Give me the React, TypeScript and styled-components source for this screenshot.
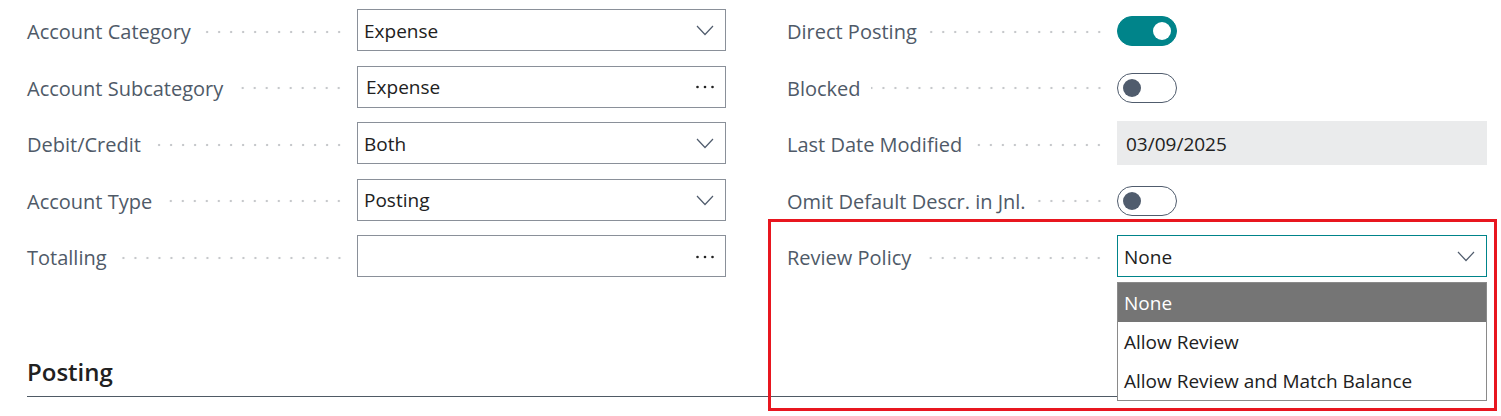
import React from 'react'
import styled, { createGlobalStyle } from 'styled-components'

const GlobalStyle = createGlobalStyle`
  html, body {
    margin: 0;
    padding: 0;
    background: #ffffff;
  }
  body {
    font-family: "Open Sans", "Noto Sans", Arial, sans-serif;
    -webkit-font-smoothing: antialiased;
  }
`

const Page = styled.div`
  padding: 9px 14px 0 27px;
  width: 1501px;
  height: 416px;
  box-sizing: border-box;
  overflow: hidden;
`

const Columns = styled.div`
  display: grid;
  grid-template-columns: 699px 700px;
  column-gap: 61px;
`

const Column = styled.div`
  display: flex;
  flex-direction: column;
`

const Row = styled.div`
  position: relative;
  display: flex;
  align-items: center;
  height: 42px;
  margin-bottom: 14.5px;
`

const Label = styled.div`
  flex: 0 0 330px;
  display: flex;
  align-items: center;
  padding-top: 3px;
  font-size: 20px;
  color: #4f5a68;
  white-space: nowrap;
`

const Leader = styled.span`
  flex: 1;
  height: 4px;
  margin: 0 12px 0 10px;
  background-image: radial-gradient(circle, #c6c8cb 1.1px, transparent 1.6px);
  background-size: 12px 4px;
  background-position: right center;
  background-repeat: repeat-x;
`

const Control = styled.div<{ $focused?: boolean; $readOnly?: boolean }>`
  position: relative;
  flex: 1;
  height: ${(p) => (p.$readOnly ? '44px' : '42px')};
  box-sizing: border-box;
  display: flex;
  align-items: center;
  padding: 1px 11px 0 6px;
  border: 1px solid
    ${(p) => (p.$readOnly ? 'transparent' : p.$focused ? '#00848a' : '#8a9099')};
  background: ${(p) => (p.$readOnly ? '#eaebec' : '#ffffff')};
  font-size: 19px;
  color: #212121;
`

const Value = styled.span<{ $inset?: boolean }>`
  flex: 1;
  padding-left: ${(p) => (p.$inset ? '2px' : '0')};
  white-space: nowrap;
`

const Toggle = styled.div<{ $on?: boolean }>`
  width: 60px;
  height: 30px;
  margin-top: 2px;
  box-sizing: border-box;
  border-radius: 15px;
  border: 1px solid ${(p) => (p.$on ? '#00848a' : '#505c6d')};
  background: ${(p) => (p.$on ? '#00848a' : '#ffffff')};
  display: flex;
  align-items: center;
  justify-content: ${(p) => (p.$on ? 'flex-end' : 'flex-start')};
  padding: 0 5px 0 5px;
`

const Knob = styled.span<{ $on?: boolean }>`
  width: 18px;
  height: 18px;
  border-radius: 50%;
  background: ${(p) => (p.$on ? '#ffffff' : '#505c6d')};
`

const Dropdown = styled.ul`
  position: absolute;
  top: calc(100% + 6px);
  left: -1px;
  right: -1px;
  margin: 0;
  padding: 0;
  list-style: none;
  background: #ffffff;
  border: 1px solid #8a8a8a;
  z-index: 2;
`

const Option = styled.li<{ $active?: boolean }>`
  height: 39px;
  display: flex;
  align-items: center;
  padding: 1px 0 0 6px;
  box-sizing: border-box;
  font-size: 19px;
  background: ${(p) => (p.$active ? '#757575' : '#ffffff')};
  color: ${(p) => (p.$active ? '#ffffff' : '#212121')};
`

const Highlight = styled.div`
  position: absolute;
  top: -16px;
  left: -19px;
  right: -10px;
  height: 192px;
  box-sizing: border-box;
  border: 3px solid #e8161f;
  pointer-events: none;
  z-index: 3;
`

const SectionTitle = styled.h2`
  margin: 64px 0 0 0;
  padding-bottom: 8px;
  font-size: 24px;
  line-height: 32px;
  font-weight: 600;
  color: #212121;
  border-bottom: 1px solid #4f5a65;
  width: 1460px;
`

const Chevron = () => (
  <svg width="18" height="11" viewBox="0 0 18 11" fill="none">
    <polyline points="1,1 9,9.5 17,1" stroke="#505c6d" strokeWidth="1.2" />
  </svg>
)

const Ellipsis = () => (
  <svg width="18" height="4" viewBox="0 0 18 4">
    <circle cx="1.5" cy="2" r="1.3" fill="#212121" />
    <circle cx="9" cy="2" r="1.3" fill="#212121" />
    <circle cx="16.5" cy="2" r="1.3" fill="#212121" />
  </svg>
)

type Field =
  | { kind: 'select' | 'lookup'; label: string; value: string }
  | { kind: 'toggle'; label: string; on: boolean }
  | { kind: 'readonly'; label: string; value: string }

const leftFields: Field[] = [
  { kind: 'select', label: 'Account Category', value: 'Expense' },
  { kind: 'lookup', label: 'Account Subcategory', value: 'Expense' },
  { kind: 'select', label: 'Debit/Credit', value: 'Both' },
  { kind: 'select', label: 'Account Type', value: 'Posting' },
  { kind: 'lookup', label: 'Totalling', value: '' },
]

const rightFields: Field[] = [
  { kind: 'toggle', label: 'Direct Posting', on: true },
  { kind: 'toggle', label: 'Blocked', on: false },
  { kind: 'readonly', label: 'Last Date Modified', value: '03/09/2025' },
  { kind: 'toggle', label: 'Omit Default Descr. in Jnl.', on: false },
]

const reviewOptions = ['None', 'Allow Review', 'Allow Review and Match Balance']

const FieldRow = ({ field }: { field: Field }) => (
  <Row>
    <Label>
      {field.label}
      <Leader />
    </Label>
    {field.kind === 'toggle' ? (
      <Toggle $on={field.on}>
        <Knob $on={field.on} />
      </Toggle>
    ) : field.kind === 'readonly' ? (
      <Control $readOnly>
        <Value $inset>{field.value}</Value>
      </Control>
    ) : (
      <Control>
        <Value $inset={field.kind === 'lookup'}>{field.value}</Value>
        {field.kind === 'select' ? <Chevron /> : <Ellipsis />}
      </Control>
    )}
  </Row>
)

export default function App() {
  return (
    <Page>
      <GlobalStyle />
      <Columns>
        <Column>
          {leftFields.map((f) => (
            <FieldRow key={f.label} field={f} />
          ))}
        </Column>
        <Column>
          {rightFields.map((f) => (
            <FieldRow key={f.label} field={f} />
          ))}
          <Row>
            <Highlight />
            <Label>
              Review Policy
              <Leader />
            </Label>
            <Control $focused>
              <Value>None</Value>
              <Chevron />
              <Dropdown>
                {reviewOptions.map((o, i) => (
                  <Option key={o} $active={i === 0}>
                    {o}
                  </Option>
                ))}
              </Dropdown>
            </Control>
          </Row>
        </Column>
      </Columns>
      <SectionTitle>Posting</SectionTitle>
    </Page>
  )
}
